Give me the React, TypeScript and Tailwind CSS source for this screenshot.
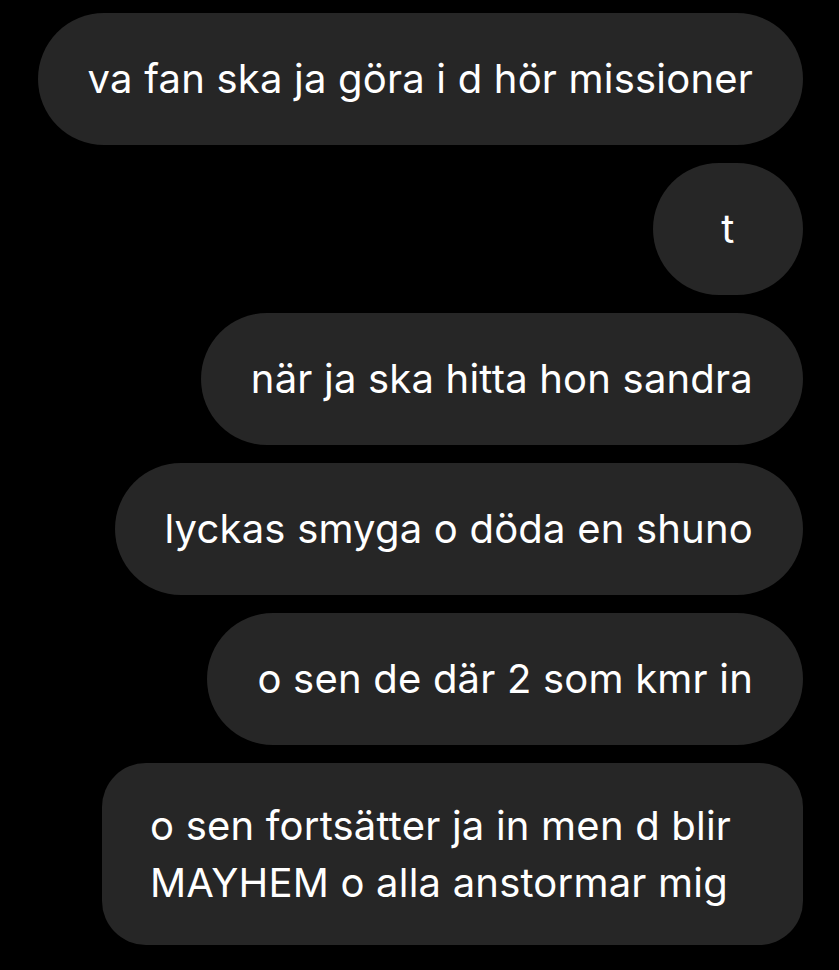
import React from "react";

const single = [
  { text: "va fan ska ja göra i d hör missioner" },
  { text: "t" },
  { text: "när ja ska hitta hon sandra" },
  { text: "lyckas smyga o döda en shuno" },
  { text: "o sen de där 2 som kmr in" },
];

export default function App() {
  return (
    <div
      className="min-h-[970px] w-[839px] bg-black pt-[13px] pr-[36px] flex flex-col items-end gap-[18px] text-white"
      style={{ fontFamily: "Inter, 'Noto Sans', sans-serif" }}
    >
      {single.map((m, i) => (
        <div
          key={i}
          className="h-[132px] min-w-[150px] rounded-full bg-[#262626] px-[50px] flex items-center justify-center text-[40px] tracking-[0.2px] whitespace-nowrap"
        >
          {m.text}
        </div>
      ))}
      <div className="w-[701px] rounded-[44px] bg-[#262626] pl-[48px] pr-[50px] py-[34px] text-[40px] leading-[57px] tracking-[0.2px]">
        <div>o sen fortsätter ja in men d blir</div>
        <div>MAYHEM o alla anstormar mig</div>
      </div>
    </div>
  );
}
